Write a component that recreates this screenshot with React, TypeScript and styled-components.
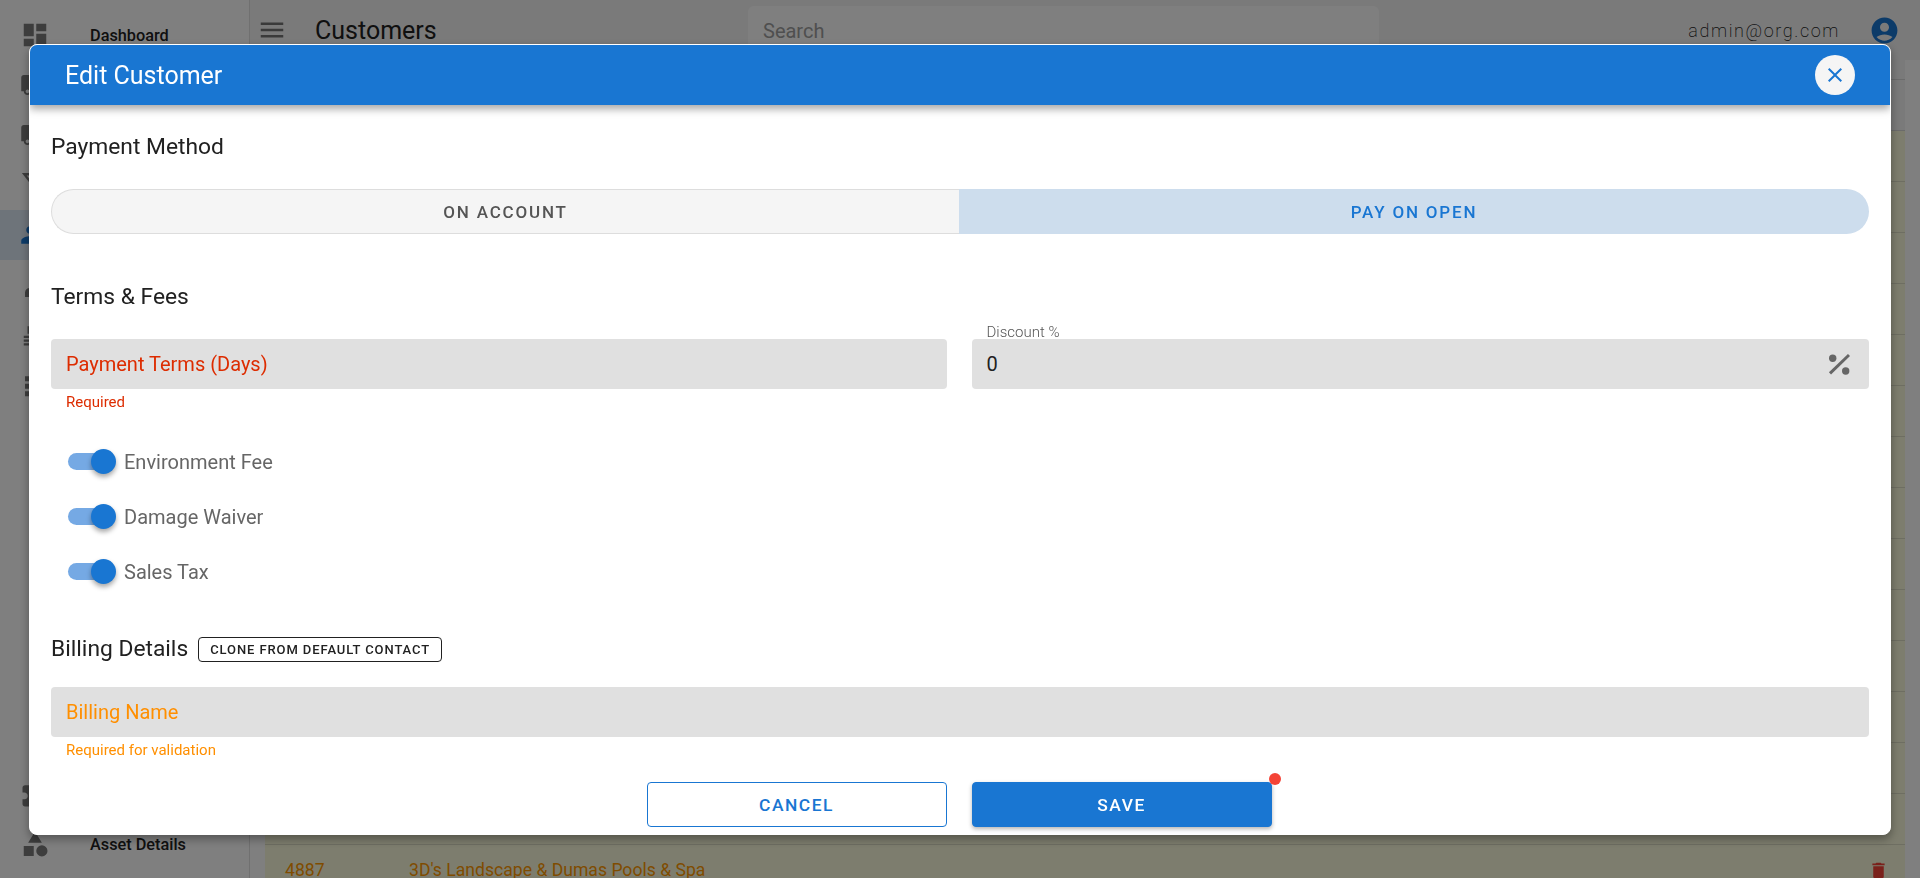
import React from 'react';
import styled, { createGlobalStyle } from 'styled-components';

const GlobalStyle = createGlobalStyle`
  html, body {
    margin: 0;
    height: 100%;
    overflow: hidden;
    font-family: Roboto, "Liberation Sans", sans-serif;
    background: #fff;
  }
  * { box-sizing: border-box; }
`;

const ICONS = {
  dashboard: 'M3 13h8V3H3v10zm0 8h8v-6H3v6zm10 0h8V11h-8v10zm0-18v6h8V3h-8z',
  truck: 'M20 8h-3V4H3c-1.1 0-2 .9-2 2v11h2c0 1.66 1.34 3 3 3s3-1.34 3-3h6c0 1.66 1.34 3 3 3s3-1.34 3-3h2v-5l-3-4zM6 18.5c-.83 0-1.5-.67-1.5-1.5s.67-1.5 1.5-1.5 1.5.67 1.5 1.5-.67 1.5-1.5 1.5zm13.5-9 1.96 2.5H17V9.5h2.5zm-1.5 9c-.83 0-1.5-.67-1.5-1.5s.67-1.5 1.5-1.5 1.5.67 1.5 1.5-.67 1.5-1.5 1.5z',
  funnel: 'M1.5 2.4h21L14.5 12.5V21l-5-2.5v-6zM5.4 4.4l6.1 7.4v5.6l1 .5v-6.1l6.1-7.4z',
  people: 'M16 11c1.66 0 2.99-1.34 2.99-3S17.66 5 16 5c-1.66 0-3 1.34-3 3s1.34 3 3 3zm-8 0c1.66 0 2.99-1.34 2.99-3S9.66 5 8 5C6.34 5 5 6.34 5 8s1.34 3 3 3zm0 2c-2.33 0-7 1.17-7 3.5V19h14v-2.5c0-2.33-4.67-3.5-7-3.5zm8 0c-.29 0-.62.02-.97.05 1.16.84 1.97 1.97 1.97 3.45V19h6v-2.5c0-2.33-4.67-3.5-7-3.5z',
  tag: 'M4 21.6V18a4 4 0 0 1 4-3.6h12v7.2z',
  list: 'M3 12.5h18v1.8H3zm0 3h18v1.8H3zm0 3h18v1.8H3zM6 5h12v6H6z',
  stack: 'M4 5h16v4H4zm0 6h16v4H4zm0 6h16v4H4z',
  extension: 'M20.5 11H19V7c0-1.1-.9-2-2-2h-4V3.5C13 2.12 11.88 1 10.5 1S8 2.12 8 3.5V5H4c-1.1 0-1.99.9-1.99 2v3.8H3.5c1.49 0 2.7 1.21 2.7 2.7s-1.21 2.7-2.7 2.7H2V20c0 1.1.9 2 2 2h3.8v-1.5c0-1.49 1.21-2.7 2.7-2.7 1.49 0 2.7 1.21 2.7 2.7V22H17c1.1 0 2-.9 2-2v-4h1.5c1.38 0 2.5-1.12 2.5-2.5S21.88 11 20.5 11z',
  category: 'M12 2l-5.5 9h11zM17.5 13a4.5 4.5 0 1 0 0 9 4.5 4.5 0 0 0 0-9zM3 13.5h8v8H3z',
  menu: 'M3 18h18v-2H3v2zm0-5h18v-2H3v2zm0-7v2h18V6H3z',
  account: 'M12 2C6.48 2 2 6.48 2 12s4.48 10 10 10 10-4.48 10-10S17.52 2 12 2zm0 4c1.93 0 3.5 1.57 3.5 3.5S13.93 13 12 13s-3.5-1.57-3.5-3.5S10.07 6 12 6zm0 14c-2.03 0-4.43-.82-6.14-2.88C7.55 15.8 9.68 15 12 15s4.45.8 6.14 2.12C16.43 19.18 14.03 20 12 20z',
  trash: 'M6 19c0 1.1.9 2 2 2h8c1.1 0 2-.9 2-2V7H6v12zM19 4h-3.5l-1-1h-5l-1 1H5v2h14V4z',
  close: 'M19 6.41 17.59 5 12 10.59 6.41 5 5 6.41 10.59 12 5 17.59 6.41 19 12 13.41 17.59 19 19 17.59 13.41 12z',
};

const Shell = styled.div`
  display: flex;
  width: 1920px;
  height: 878px;
  overflow: hidden;
`;

const Sidebar = styled.nav`
  display: flex;
  flex-direction: column;
  flex: 0 0 250px;
  padding: 10px 0 9px;
  background: #fff;
  border-right: 1px solid #e0e0e0;
`;

const NavItem = styled.div<{ $active?: boolean; $pushed?: boolean }>`
  display: flex;
  align-items: center;
  flex: 0 0 50px;
  padding-left: 20px;
  gap: 40px;
  margin-top: ${(p) => (p.$pushed ? 'auto' : '0')};
  background: ${(p) => (p.$active ? '#dde8f5' : 'transparent')};
  color: ${(p) => (p.$active ? '#1976d2' : '#7a7a7a')};
`;

const NavLabel = styled.span`
  font-size: 16.3px;
  font-weight: 500;
  color: #212121;
`;

const Icon = styled.svg<{ $size: number }>`
  display: block;
  flex: none;
  width: ${(p) => p.$size}px;
  height: ${(p) => p.$size}px;
  fill: currentColor;
`;

const Main = styled.main`
  display: flex;
  flex-direction: column;
  flex: 1;
  min-width: 0;
`;

const TopBar = styled.header`
  display: flex;
  align-items: center;
  flex: 0 0 60px;
  padding: 0 20px 0 7px;
  background: #f5f5f5;
  color: #757575;
`;

const PageTitle = styled.h1`
  flex: 0 0 433px;
  margin: 0 0 0 28px;
  font-size: 25px;
  font-weight: 400;
  color: #212121;
`;

const SearchBox = styled.div`
  display: flex;
  align-items: center;
  width: 631px;
  height: 48px;
  padding: 2px 15px 0;
  border-radius: 6px;
  background: #fff;
  font-size: 20px;
  color: #9e9e9e;
`;

const UserEmail = styled.span`
  margin-left: auto;
  margin-right: 29px;
  font-size: 18px;
  font-weight: 200;
  letter-spacing: 1.6px;
  color: #212121;
`;

const UserIcon = styled.span`
  display: flex;
  color: #1976d2;
`;

const Content = styled.section`
  display: flex;
  flex-direction: column;
  flex: 1;
  padding: 0 15px;
  background: #fff;
`;

const TableHead = styled.div`
  flex: 0 0 20px;
  background: #f5f5f5;
  border-bottom: 1px solid #d6d6d6;
`;

const Row = styled.div<{ $plain?: boolean }>`
  display: flex;
  align-items: center;
  flex: 0 0 51px;
  padding: 0 16px 0 20px;
  background: ${(p) => (p.$plain ? '#f5f5f5' : '#fbfbdc')};
  border-bottom: 1px solid ${(p) => (p.$plain ? '#d6d6d6' : '#dcdcc4')};
  font-size: 17.6px;
  color: #ff9800;
`;

const RowId = styled.span`
  flex: 0 0 124px;
`;

const RowName = styled.span`
  flex: 1;
`;

const RowDelete = styled.span`
  display: flex;
  color: #f44336;
`;

const Backdrop = styled.div`
  position: fixed;
  inset: 0;
  display: flex;
  align-items: flex-start;
  justify-content: center;
  padding-top: 44px;
  background: rgba(0, 0, 0, 0.5);
`;

const Modal = styled.div`
  width: 1862px;
  height: 791px;
  background: #fff;
  border: 1px solid #fff;
  border-radius: 8px;
  box-shadow: 0 4px 10px rgba(0, 0, 0, 0.35);
  overflow: hidden;
`;

const ModalHeader = styled.div`
  position: relative;
  display: flex;
  align-items: center;
  justify-content: space-between;
  height: 60px;
  padding: 0 35px;
  background: #1976d2;
  color: #fff;
  box-shadow: 0 4px 8px rgba(0, 0, 0, 0.35);
`;

const ModalTitle = styled.h2`
  margin: 0;
  font-size: 25px;
  font-weight: 400;
`;

const CloseButton = styled.button`
  display: flex;
  align-items: center;
  justify-content: center;
  width: 40px;
  height: 40px;
  padding: 0;
  border: 0;
  border-radius: 50%;
  background: #f5f5f5;
  color: #1976d2;
`;

const ModalBody = styled.div`
  display: flex;
  flex-direction: column;
  padding: 29px 21px 8px;
`;

const SectionTitle = styled.h3<{ $top?: number }>`
  margin: ${(p) => p.$top ?? 0}px 0 0;
  font-size: 22.8px;
  line-height: 26px;
  font-weight: 400;
  color: #212121;
`;

const Segments = styled.div`
  display: grid;
  grid-template-columns: 908px 1fr;
  height: 45px;
  margin-top: 29px;
`;

const Segment = styled.div<{ $selected?: boolean }>`
  display: flex;
  align-items: center;
  justify-content: center;
  font-size: 17px;
  font-weight: 500;
  letter-spacing: 1.8px;
  ${(p) =>
    p.$selected
      ? `
    background: #cddded;
    color: #1976d2;
    border-radius: 0 23px 23px 0;
  `
      : `
    background: #f5f5f5;
    color: #555;
    border: 1px solid #ddd;
    border-right: 0;
    border-radius: 23px 0 0 23px;
  `}
`;

const FieldGrid = styled.div`
  display: grid;
  grid-template-columns: 895.5px 1fr;
  column-gap: 25px;
  margin-top: 29px;
`;

const Field = styled.div<{ $top?: number }>`
  position: relative;
  margin-top: ${(p) => p.$top ?? 0}px;
`;

type Tone = 'error' | 'warn' | 'value';
const toneColor = (t: Tone) => (t === 'error' ? '#dd2c00' : t === 'warn' ? '#ff8f00' : '#212121');

const FieldBox = styled.div<{ $tone: Tone }>`
  display: flex;
  align-items: center;
  justify-content: space-between;
  height: 50px;
  padding: 0 15px;
  border-radius: 4px;
  background: #e0e0e0;
  font-size: 20px;
  color: ${(p) => toneColor(p.$tone)};
`;

const FloatLabel = styled.label`
  position: absolute;
  left: 15px;
  top: -16px;
  font-size: 15px;
  font-weight: 300;
  color: #555;
`;

const Helper = styled.div<{ $tone: Tone }>`
  margin: 5px 0 0 15px;
  font-size: 15px;
  line-height: 16px;
  color: ${(p) => toneColor(p.$tone)};
`;

const PercentIcon = styled.svg`
  width: 24px;
  height: 24px;
  margin-right: 4px;
`;

const SwitchList = styled.div`
  display: flex;
  flex-direction: column;
  margin-top: 24px;
`;

const SwitchRow = styled.div`
  display: flex;
  align-items: center;
  height: 55px;
  padding-left: 17px;
  gap: 8px;
  font-size: 20px;
  color: #666;
`;

const SwitchControl = styled.span`
  position: relative;
  display: flex;
  align-items: center;
  width: 48px;
  height: 25px;
`;

const SwitchTrack = styled.span`
  width: 42px;
  height: 17px;
  border-radius: 9px;
  background: #75a9e4;
`;

const SwitchThumb = styled.span`
  position: absolute;
  right: 0;
  top: 0;
  width: 25px;
  height: 25px;
  border-radius: 50%;
  background: #1976d2;
  box-shadow: 0 3px 5px rgba(0, 0, 0, 0.35);
`;

const BillingHead = styled.div`
  display: flex;
  align-items: center;
  gap: 10px;
  margin-top: 37px;
`;

const CloneButton = styled.button`
  height: 25px;
  padding: 0 11px;
  border: 1px solid #212121;
  border-radius: 4px;
  background: #fff;
  font-family: inherit;
  font-size: 13px;
  font-weight: 500;
  letter-spacing: 0.9px;
  color: #212121;
`;

const Footer = styled.div`
  display: flex;
  justify-content: center;
  gap: 25px;
  margin-top: 24px;
  padding-right: 2px;
`;

const FooterButton = styled.button<{ $primary?: boolean }>`
  position: relative;
  width: 300px;
  height: 45px;
  border-radius: 4px;
  border: 1px solid #1976d2;
  font-family: inherit;
  font-size: 17.4px;
  font-weight: 500;
  letter-spacing: 1.5px;
  background: ${(p) => (p.$primary ? '#1976d2' : '#fff')};
  color: ${(p) => (p.$primary ? '#fff' : '#1976d2')};
  box-shadow: ${(p) => (p.$primary ? '0 2px 4px rgba(0, 0, 0, 0.3)' : 'none')};
`;

const NotifyDot = styled.span`
  position: absolute;
  top: -10px;
  right: -10px;
  width: 12px;
  height: 12px;
  border-radius: 50%;
  background: #f44336;
`;

const Glyph: React.FC<{ d: string; size?: number }> = ({ d, size = 30 }) => (
  <Icon $size={size} viewBox="0 0 24 24">
    <path d={d} fillRule="evenodd" />
  </Icon>
);

const navTop = [
  { icon: ICONS.dashboard, label: 'Dashboard' },
  { icon: ICONS.truck },
  { icon: ICONS.truck },
  { icon: ICONS.funnel },
  { icon: ICONS.people, active: true },
  { icon: ICONS.tag },
  { icon: ICONS.list },
  { icon: ICONS.stack },
];

const switches = ['Environment Fee', 'Damage Waiver', 'Sales Tax'];

const App: React.FC = () => {
  return (
    <>
      <GlobalStyle />
      <Shell>
        <Sidebar>
          {navTop.map((item, i) => (
            <NavItem key={i} $active={item.active}>
              <Glyph d={item.icon} />
              {item.label && <NavLabel>{item.label}</NavLabel>}
            </NavItem>
          ))}
          <NavItem $pushed>
            <Glyph d={ICONS.extension} />
          </NavItem>
          <NavItem>
            <Glyph d={ICONS.category} />
            <NavLabel>Asset Details</NavLabel>
          </NavItem>
        </Sidebar>
        <Main>
          <TopBar>
            <Glyph d={ICONS.menu} />
            <PageTitle>Customers</PageTitle>
            <SearchBox>Search</SearchBox>
            <UserEmail>admin@org.com</UserEmail>
            <UserIcon>
              <Glyph d={ICONS.account} size={31} />
            </UserIcon>
          </TopBar>
          <Content>
            <TableHead />
            <Row $plain />
            {Array.from({ length: 14 }, (_, i) => (
              <Row key={i} />
            ))}
            <Row>
              <RowId>4887</RowId>
              <RowName>3D's Landscape &amp; Dumas Pools &amp; Spa</RowName>
              <RowDelete>
                <Glyph d={ICONS.trash} size={21} />
              </RowDelete>
            </Row>
          </Content>
        </Main>
      </Shell>

      <Backdrop>
        <Modal>
          <ModalHeader>
            <ModalTitle>Edit Customer</ModalTitle>
            <CloseButton aria-label="Close">
              <Glyph d={ICONS.close} size={24} />
            </CloseButton>
          </ModalHeader>
          <ModalBody>
            <SectionTitle>Payment Method</SectionTitle>
            <Segments>
              <Segment>ON ACCOUNT</Segment>
              <Segment $selected>PAY ON OPEN</Segment>
            </Segments>

            <SectionTitle $top={50}>Terms &amp; Fees</SectionTitle>
            <FieldGrid>
              <Field>
                <FieldBox $tone="error">Payment Terms (Days)</FieldBox>
                <Helper $tone="error">Required</Helper>
              </Field>
              <Field>
                <FloatLabel>Discount %</FloatLabel>
                <FieldBox $tone="value">
                  0
                  <PercentIcon viewBox="0 0 24 24">
                    <circle cx="6.7" cy="6.3" r="3.7" fill="#666" />
                    <circle cx="19.7" cy="19" r="3.7" fill="#666" />
                    <path d="M4 21.3 23 3" stroke="#666" strokeWidth="3" />
                  </PercentIcon>
                </FieldBox>
              </Field>
            </FieldGrid>

            <SwitchList>
              {switches.map((name) => (
                <SwitchRow key={name}>
                  <SwitchControl>
                    <SwitchTrack />
                    <SwitchThumb />
                  </SwitchControl>
                  {name}
                </SwitchRow>
              ))}
            </SwitchList>

            <BillingHead>
              <SectionTitle>Billing Details</SectionTitle>
              <CloneButton>CLONE FROM DEFAULT CONTACT</CloneButton>
            </BillingHead>
            <Field $top={25}>
              <FieldBox $tone="warn">Billing Name</FieldBox>
              <Helper $tone="warn">Required for validation</Helper>
            </Field>

            <Footer>
              <FooterButton>CANCEL</FooterButton>
              <FooterButton $primary>
                SAVE
                <NotifyDot />
              </FooterButton>
            </Footer>
          </ModalBody>
        </Modal>
      </Backdrop>
    </>
  );
};

export default App;
